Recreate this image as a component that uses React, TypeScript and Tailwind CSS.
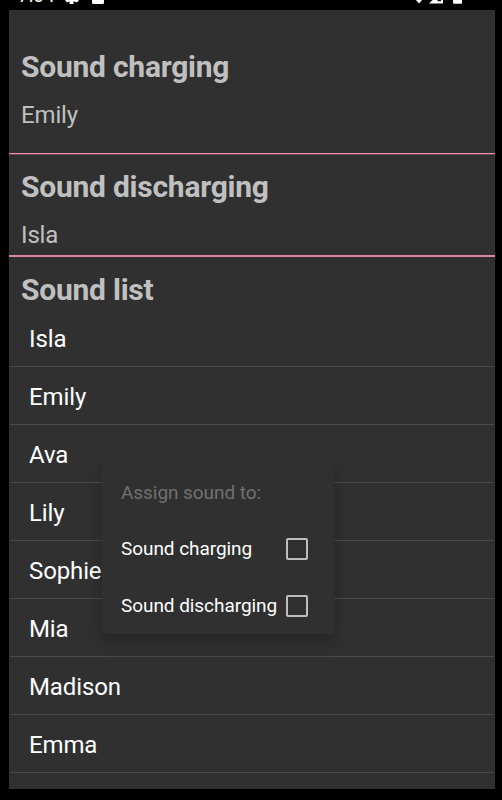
const sounds = ["Isla", "Emily", "Ava", "Lily", "Sophie", "Mia", "Madison", "Emma"];

function StatusBar() {
  return (
    <div className="relative h-[10px] shrink-0 overflow-hidden bg-black text-white">
      <div className="absolute left-[18px] top-[-14px] flex h-[20px] items-center text-[19px] leading-[20px]">7:04</div>
      <svg className="absolute left-0 top-0" width="502" height="10" viewBox="0 0 502 10" fill="white">
        <path d="M65 -5H79V0L77 2.5L73.5 1.2V4H69.5V1.2L67 2.5L65 0Z" />
        <rect x="92" y="-10" width="12" height="14" rx="1.5" />
        <path d="M409 -8H429L419 3.5Z" />
        <path d="M429 3.5L443 -10V3.5Z" />
        <path d="M437.5 -1H441V1.2H437.5Z" fill="black" />
        <rect x="453" y="-12" width="9" height="15.8" rx="1" />
      </svg>
    </div>
  );
}

function Current({ title, value, className }: { title: string; value: string; className: string }) {
  return (
    <section className={`shrink-0 pl-3 text-[#c0c0c0] ${className}`}>
      <h2 className="text-[30px] leading-[36px] font-bold tracking-[-0.24px]">{title}</h2>
      <p className="mt-[16px] text-[24px] leading-[28px] tracking-[-0.15px]">{value}</p>
    </section>
  );
}

function Option({ label }: { label: string }) {
  return (
    <label className="flex h-[57px] items-center justify-between pr-[26px] pl-[19px] text-[19px] tracking-[-0.06px] text-white">
      <span className="whitespace-nowrap pt-[2px]">{label}</span>
      <span className="size-[22px] shrink-0 rounded-[2px] border-2 border-[#bdbdbd]" />
    </label>
  );
}

export default function App() {
  return (
    <div className="relative flex h-[800px] w-[502px] flex-col overflow-hidden bg-black font-['Roboto',sans-serif]">
      <StatusBar />
      <main className="mr-[7px] ml-[9px] flex h-[779px] flex-col overflow-hidden bg-[#303030]">
        <Current title="Sound charging" value="Emily" className="h-[143px] pt-[39px]" />
        <div className="h-[2px] shrink-0 border-t border-t-[#ee93ab] bg-[#744654]" />
        <Current title="Sound discharging" value="Isla" className="h-[100px] pt-[14px]" />
        <div className="h-[2px] shrink-0 bg-[#dc869d]" />
        <h2 className="mt-[15px] shrink-0 pl-3 text-[30px] leading-[36px] font-bold tracking-[-0.24px] text-[#c0c0c0]">Sound list</h2>
        <ul className="mx-px mt-px shrink-0">
          {sounds.map((name) => (
            <li key={name} className="flex h-[58px] items-center border-b border-b-[#4a4a4a] pt-[2px] pl-[19px] text-[24px] tracking-[-0.12px] text-white">
              {name}
            </li>
          ))}
        </ul>
      </main>
      <div className="absolute top-[463px] left-[102px] h-[171px] w-[232px] rounded-[2px] bg-[#303030] shadow-[0_8px_16px_rgba(0,0,0,0.22)]">
        <div className="flex h-[57px] items-center pt-[3px] pl-[19px] text-[19px] tracking-[-0.06px] text-[#707070]">Assign sound to:</div>
        <Option label="Sound charging" />
        <Option label="Sound discharging" />
      </div>
    </div>
  );
}
